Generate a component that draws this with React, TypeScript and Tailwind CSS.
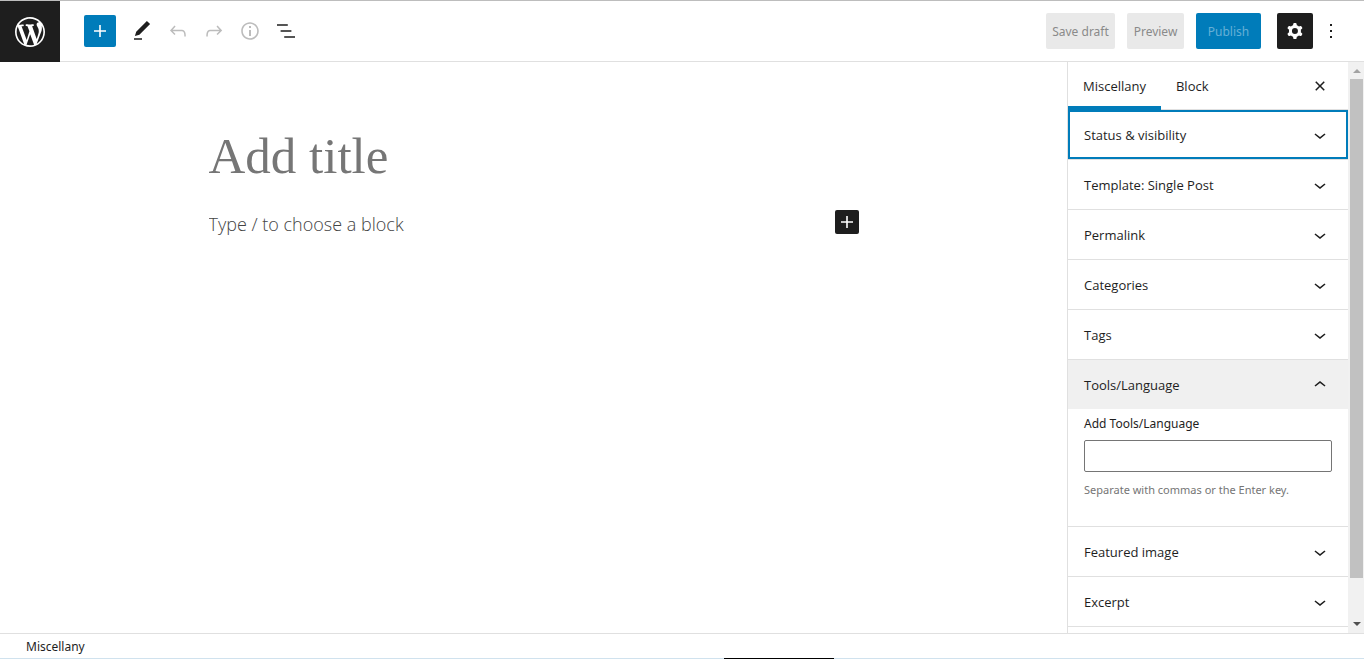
import React, { useState } from "react";

const paths = {
  logo: "M20 10c0-5.51-4.49-10-10-10C4.48 0 0 4.49 0 10c0 5.52 4.48 10 10 10 5.51 0 10-4.48 10-10zM7.78 15.37L4.37 6.22c.55-.02 1.17-.08 1.17-.08.5-.06.44-1.13-.06-1.11 0 0-1.45.11-2.37.11-.18 0-.37 0-.58-.01C4.12 2.69 6.87 1.11 10 1.11c2.33 0 4.45.87 6.05 2.34-.68-.11-1.65.39-1.65 1.58 0 .74.45 1.36.9 2.1.35.61.55 1.36.55 2.46 0 1.49-1.4 5-1.4 5l-3.03-8.37c.54-.02.82-.17.82-.17.5-.05.44-1.25-.06-1.22 0 0-1.44.12-2.38.12-.87 0-2.33-.12-2.33-.12-.5-.03-.56 1.2-.06 1.22l.92.08 1.26 3.41zM17.41 10c.24-.64.74-1.87.43-4.25.7 1.29 1.05 2.71 1.05 4.25 0 3.29-1.73 6.24-4.4 7.78.97-2.59 1.94-5.2 2.92-7.78zM6.1 18.09C3.12 16.65 1.11 13.53 1.11 10c0-1.3.23-2.48.72-3.59C3.25 10.3 4.67 14.2 6.1 18.09zm4.03-6.63l2.58 6.98c-.86.29-1.76.45-2.71.45-.79 0-1.57-.11-2.29-.33.81-2.38 1.62-4.74 2.42-7.1z",
  plus: "M18 11.2h-5.2V6h-1.6v5.2H6v1.6h5.2V18h1.6v-5.2H18z",
  edit: "M20.1 5.1L16.9 2 6.2 12.7l-1.3 4.4 4.5-1.3L20.1 5.1zM4 20.8h8v-1.5H4v1.5z",
  undo: "M18.3 11.7c-.6-.6-1.4-.9-2.3-.9H6.7l2.9-3.3-1.1-1-4.5 5L8.5 16l1-1-2.7-2.7H16c.5 0 .9.2 1.3.5 1 1 1 3.4 1 4.5v.3h1.5v-.2c0-1.5 0-4.3-1.5-5.7z",
  redo: "M15.6 6.5l-1.1 1 2.9 3.3H8c-.9 0-1.7.3-2.3.9-1.4 1.5-1.4 4.2-1.4 5.6v.2h1.5v-.3c0-1.1 0-3.5 1-4.5.3-.3.7-.5 1.3-.5h9.2L14.5 15l1.1 1.1 4.6-4.6-4.6-5z",
  info: "M12 3.2c-4.8 0-8.8 3.9-8.8 8.8 0 4.8 3.9 8.8 8.8 8.8 4.8 0 8.8-3.9 8.8-8.8 0-4.8-4-8.8-8.8-8.8zm0 16c-4 0-7.2-3.3-7.2-7.2C4.8 8 8 4.8 12 4.8s7.2 3.3 7.2 7.2c0 4-3.2 7.2-7.2 7.2zM11 17h2v-6h-2v6zm0-8h2V7h-2v2z",
  list: "M13.8 5.2H3v1.5h10.8V5.2zm-3.6 12v1.5H21v-1.5H10.2zm7.2-6H6.6v1.5h10.8v-1.5z",
  cog: "M10.289 4.836A1 1 0 0111.275 4h1.306a1 1 0 01.987.836l.244 1.466c.787.26 1.503.679 2.108 1.218l1.393-.522a1 1 0 011.216.437l.653 1.13a1 1 0 01-.23 1.273l-1.148.944a6.025 6.025 0 010 2.435l1.149.946a1 1 0 01.23 1.272l-.653 1.13a1 1 0 01-1.216.437l-1.394-.522c-.605.54-1.32.958-2.108 1.218l-.244 1.466a1 1 0 01-.987.836h-1.306a1 1 0 01-.986-.836l-.244-1.466a5.995 5.995 0 01-2.108-1.218l-1.394.522a1 1 0 01-1.217-.436l-.653-1.131a1 1 0 01.23-1.272l1.149-.946a6.026 6.026 0 010-2.435l-1.148-.944a1 1 0 01-.23-1.272l.653-1.131a1 1 0 011.217-.437l1.393.522a5.994 5.994 0 012.108-1.218l.244-1.466zM14.929 12a3 3 0 11-6 0 3 3 0 016 0z",
  more: "M13 19h-2v-2h2v2zm0-6h-2v-2h2v2zm0-6h-2V5h2v2z",
  close: "M12 13.06l3.712 3.713 1.061-1.06L13.061 12l3.712-3.712-1.06-1.06L12 10.938 8.288 7.227l-1.061 1.06L10.939 12l-3.712 3.712 1.06 1.061L12 13.061z",
  down: "M17.5 11.6L12 16l-5.5-4.4.9-1.2L12 14l4.5-3.6 1 1.2z",
  up: "M6.5 12.4L12 8l5.5 4.4-.9 1.2L12 10l-4.5 3.6-1-1.2z",
};

function Icon({ name, className = "size-6" }: { name: keyof typeof paths; className?: string }) {
  return (
    <svg
      viewBox={name === "logo" ? "-2 -2 24 24" : "0 0 24 24"}
      className={`shrink-0 fill-current ${className}`}
      aria-hidden="true"
    >
      <path fillRule="evenodd" clipRule="evenodd" d={paths[name]} />
    </svg>
  );
}

function ToolButton({ name, label, disabled }: { name: keyof typeof paths; label: string; disabled?: boolean }) {
  return (
    <button
      type="button"
      aria-label={label}
      disabled={disabled}
      className="flex size-9 items-center justify-center disabled:text-[#bcbcbc]"
    >
      <Icon name={name} />
    </button>
  );
}

function Panel({
  title,
  focused,
  initialOpen = false,
  children,
}: {
  title: string;
  focused?: boolean;
  initialOpen?: boolean;
  children?: React.ReactNode;
}) {
  const [open, setOpen] = useState(initialOpen);
  return (
    <section className="shrink-0 border-b border-[#e0e0e0]">
      <h2>
        <button
          type="button"
          aria-expanded={open}
          onClick={() => setOpen(!open)}
          className={`flex h-[49px] w-full items-center justify-between px-4 text-left font-['Open_Sans',sans-serif] text-[13px] outline-none ${
            open ? "bg-[#f0f0f0]" : "bg-white"
          } ${focused ? "ring-2 ring-[#007cba] ring-inset" : ""}`}
        >
          <span className="pt-0.5">{title}</span>
          <Icon name={open ? "up" : "down"} />
        </button>
      </h2>
      {open && children}
    </section>
  );
}

function ScrollRail() {
  return (
    <div aria-hidden="true" className="flex w-4 shrink-0 flex-col items-center bg-[#f1f1f1] pl-px">
      <svg viewBox="0 0 16 17" className="h-[17px] w-4 shrink-0 fill-[#a3a3a3]">
        <path d="M4 11h8L8 7z" />
      </svg>
      <div className="w-[13px] grow-[499] basis-0 bg-[#c1c1c1]" />
      <div className="grow-[38] basis-0" />
      <svg viewBox="0 0 16 17" className="h-[17px] w-4 shrink-0 fill-[#505050]">
        <path d="M4 6h8l-4 4z" />
      </svg>
    </div>
  );
}

export default function App() {
  return (
    <div className="flex h-screen flex-col overflow-hidden bg-white font-['Noto_Sans','Open_Sans',sans-serif] text-[12px] text-[#1e1e1e]">
      <header className="flex h-[62px] shrink-0 items-stretch justify-between border-t border-b border-t-[#bdbdbd] border-b-[#e0e0e0]">
        <div className="flex items-center">
          <a
            href="#posts"
            aria-label="View posts"
            className="-mb-px flex w-[60px] items-center justify-center self-stretch bg-[#1e1e1e] text-white"
          >
            <Icon name="logo" className="size-9" />
          </a>
          <div className="flex items-center pl-6">
            <button
              type="button"
              aria-label="Add block"
              className="mr-2 flex size-8 items-center justify-center rounded-xs bg-[#007cba] text-white"
            >
              <Icon name="plus" />
            </button>
            <ToolButton name="edit" label="Tools" />
            <ToolButton name="undo" label="Undo" disabled />
            <ToolButton name="redo" label="Redo" disabled />
            <ToolButton name="info" label="Details" disabled />
            <ToolButton name="list" label="List view" />
          </div>
        </div>
        <div className="flex items-center pr-[21px]">
          <div className="flex gap-3">
            <button type="button" disabled className="h-9 w-[69px] rounded-xs bg-[#e9e9e9] pt-0.5 text-[#8a8a8a]">
              Save draft
            </button>
            <button type="button" disabled className="h-9 w-[57px] rounded-xs bg-[#e9e9e9] pt-0.5 text-[#8a8a8a]">
              Preview
            </button>
            <button type="button" disabled className="h-9 w-[65px] rounded-xs bg-[#007cba] pt-0.5 text-[#66b0d6]">
              Publish
            </button>
          </div>
          <button
            type="button"
            aria-label="Settings"
            className="ml-4 flex size-9 items-center justify-center rounded-xs bg-[#1e1e1e] text-white"
          >
            <Icon name="cog" />
          </button>
          <button type="button" aria-label="Options" className="flex h-9 items-center pl-[6px]">
            <Icon name="more" />
          </button>
        </div>
      </header>

      <div className="flex min-h-0 flex-1">
        <main className="min-w-0 flex-1">
          <div className="mx-auto flex max-w-[650px] flex-col gap-[18px] pt-[62px]">
            <input
              aria-label="Add title"
              placeholder="Add title"
              className="h-16 w-full font-['Liberation_Serif',serif] text-[51px] outline-none placeholder:text-[#767676]"
            />
            <div className="flex items-center">
              <input
                aria-label="Empty block"
                placeholder="Type / to choose a block"
                className="h-8 min-w-0 flex-1 pt-1 font-['Open_Sans',sans-serif] text-[18px] font-light outline-none placeholder:text-[#444444]"
              />
              <button
                type="button"
                aria-label="Add block"
                className="flex size-6 items-center justify-center rounded-xs bg-[#1e1e1e] text-white"
              >
                <Icon name="plus" />
              </button>
            </div>
          </div>
        </main>

        <aside className="flex w-[297px] shrink-0 border-l border-[#e0e0e0]">
          <div className="flex min-w-0 flex-1 flex-col overflow-hidden">
            <div className="flex h-12 shrink-0 items-stretch border-b border-[#e0e0e0] pr-4 font-['Open_Sans',sans-serif] text-[13px]">
              <button type="button" className="-mb-px border-b-4 border-[#007cba] px-[15px] pt-1.5">
                Miscellany
              </button>
              <button type="button" className="px-[15px] pt-0.5">
                Block
              </button>
              <button type="button" aria-label="Close settings" className="ml-auto flex items-center">
                <Icon name="close" />
              </button>
            </div>
            <Panel title="Status &amp; visibility" focused />
            <Panel title="Template: Single Post" />
            <Panel title="Permalink" />
            <Panel title="Categories" />
            <Panel title="Tags" />
            <Panel title="Tools/Language" initialOpen>
              <div className="flex flex-col px-4 pt-[5px] pb-[26px]">
                <label htmlFor="tools-language" className="leading-5">
                  Add Tools/Language
                </label>
                <input
                  id="tools-language"
                  className="mt-1.5 h-8 rounded-xs border border-[#757575] px-2 outline-none"
                />
                <p className="mt-2 text-[11px] leading-5 text-[#757575]">Separate with commas or the Enter key.</p>
              </div>
            </Panel>
            <Panel title="Featured image" />
            <Panel title="Excerpt" />
          </div>
          <ScrollRail />
        </aside>
      </div>

      <footer className="flex h-[26px] shrink-0 flex-col border-t border-[#e0e0e0]">
        <nav aria-label="Breadcrumb" className="flex flex-1 items-center pt-px pl-[26px]">
          Miscellany
        </nav>
        <div aria-hidden="true" className="flex h-px shrink-0 bg-[#d0e2ee]">
          <div className="w-[53.1%]" />
          <div className="w-[110px] bg-black" />
        </div>
      </footer>
    </div>
  );
}
